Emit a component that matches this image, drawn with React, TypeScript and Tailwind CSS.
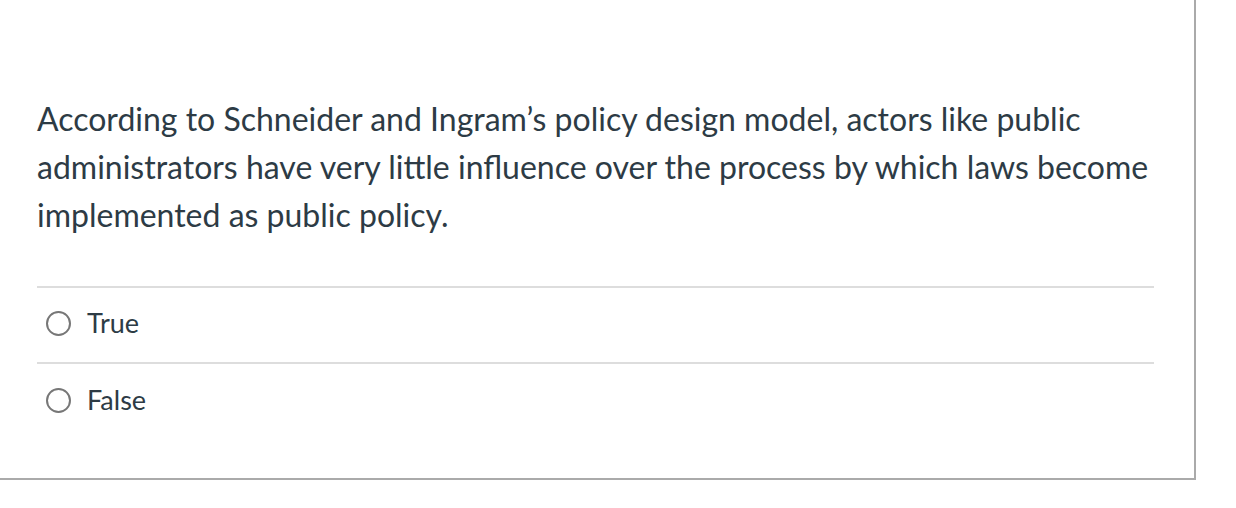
import React from 'react';

const options = ['True', 'False'];

const App: React.FC = () => {
  return (
    <div className="w-[1236px] h-[508px] bg-white font-['Lato',sans-serif] text-[#2d3b45]">
      <div className="w-[1196px] h-[480px] border-r-2 border-b-2 border-[#aaaaaa] pl-[37px] pr-[40px] pt-[95px]">
        <p className="text-[32px] leading-[48px]">
          According to Schneider and Ingram’s policy design model, actors like public administrators have very little influence over the process by which laws become implemented as public policy.
        </p>
        <div className="mt-[47px] border-t-2 border-[#dddddd]">
          {options.map((opt, i) => (
            <label
              key={opt}
              className={`flex items-center h-[76px] pb-[4px] ${i < options.length - 1 ? 'border-b-2 border-[#dddddd]' : ''}`}
            >
              <span className="ml-[9px] w-[25px] h-[25px] rounded-full border-2 border-[#777777] bg-white" />
              <span className="ml-[16px] text-[27px]">{opt}</span>
            </label>
          ))}
        </div>
      </div>
    </div>
  );
};

export default App;
